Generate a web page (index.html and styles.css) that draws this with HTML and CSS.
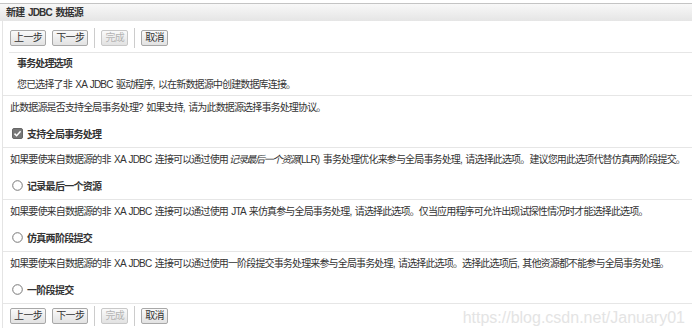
FILE: index.html
```html
<!DOCTYPE html>
<html lang="zh-CN">
<head>
  <meta charset="UTF-8" />
  <title>新建 JDBC 数据源</title>
  <link rel="stylesheet" href="styles.css">
</head>
<body>
  <div class="page">
    <div class="titlebar">新建 JDBC 数据源</div>
    <div class="panel">
      <div class="toolbar">
        <button class="btn">上一步</button>
        <button class="btn">下一步</button>
        <span class="sep"></span>
        <button class="btn disabled">完成</button>
        <span class="sep"></span>
        <button class="btn">取消</button>
      </div>

      <div class="intro">
        <div class="intro-title">事务处理选项</div>
        <div class="intro-text">您已选择了非 XA JDBC 驱动程序, 以在新数据源中创建数据库连接。</div>
      </div>

      <div class="row text">此数据源是否支持全局事务处理? 如果支持, 请为此数据源选择事务处理协议。</div>
      <div class="row option">
        <svg class="mark" viewBox="0 0 11 11" width="11" height="11">
          <rect x="0.5" y="0.5" width="10" height="10" rx="1.5" fill="#777" stroke="#666"/>
          <path d="M2.5 5.6 L4.6 7.7 L8.6 3.2" fill="none" stroke="#fff" stroke-width="1.5"/>
        </svg>
        <span>支持全局事务处理</span>
      </div>

      <div class="row text">如果要使来自数据源的非 XA JDBC 连接可以通过使用<i>记录最后一个资源</i>(LLR) 事务处理优化来参与全局事务处理, 请选择此选项。建议您用此选项代替仿真两阶段提交。</div>
      <div class="row option">
        <svg class="mark" viewBox="0 0 11 11" width="11" height="11">
          <circle cx="5.5" cy="5.5" r="4.8" fill="#fff" stroke="#777"/>
        </svg>
        <span>记录最后一个资源</span>
      </div>

      <div class="row text">如果要使来自数据源的非 XA JDBC 连接可以通过使用 JTA 来仿真参与全局事务处理, 请选择此选项。仅当应用程序可允许出现试探性情况时才能选择此选项。</div>
      <div class="row option">
        <svg class="mark" viewBox="0 0 11 11" width="11" height="11">
          <circle cx="5.5" cy="5.5" r="4.8" fill="#fff" stroke="#777"/>
        </svg>
        <span>仿真两阶段提交</span>
      </div>

      <div class="row text">如果要使来自数据源的非 XA JDBC 连接可以通过使用一阶段提交事务处理来参与全局事务处理, 请选择此选项。选择此选项后, 其他资源都不能参与全局事务处理。</div>
      <div class="row option">
        <svg class="mark" viewBox="0 0 11 11" width="11" height="11">
          <circle cx="5.5" cy="5.5" r="4.8" fill="#fff" stroke="#777"/>
        </svg>
        <span>一阶段提交</span>
      </div>

      <div class="toolbar bottom">
        <button class="btn">上一步</button>
        <button class="btn">下一步</button>
        <span class="sep"></span>
        <button class="btn disabled">完成</button>
        <span class="sep"></span>
        <button class="btn">取消</button>
      </div>
    </div>
    <div class="watermark">https://blog.csdn.net/January01</div>
  </div>
</body>
</html>
```
FILE: styles.css
```css
body {
  margin: 0;
  background: #fff;
  color: #333;
  font-family: "Liberation Sans", "Noto Sans CJK SC", sans-serif;
  font-size: 10px;
  letter-spacing: -0.85px;
  word-spacing: 1.5px;
}

.page {
  position: relative;
  width: 692px;
  height: 333px;
  overflow: hidden;
  padding-top: 3px;
  box-sizing: border-box;
}

.titlebar {
  height: 17px;
  line-height: 17px;
  border-top: 1px solid #c4c4c4;
  background: linear-gradient(#f8f8f8, #e5e5e5);
  padding-left: 6px;
  font-weight: bold;
  letter-spacing: -0.8px;
  color: #333;
}

.panel {
  margin-left: 2px;
  border-left: 1px solid #e4e4e4;
}

.toolbar {
  display: flex;
  align-items: center;
  gap: 6px;
  height: 29px;
  padding-top: 2px;
  padding-left: 1px;
  margin-left: 6px;
  border-bottom: 1px solid #e6e6e6;
}

.toolbar.bottom {
  border-bottom: none;
  height: 24px;
  padding-top: 0;
}

.btn {
  height: 16px;
  padding: 0 3px;
  border: 1px solid #a8a8a8;
  border-radius: 2px;
  background: linear-gradient(#fafafa, #e2e2e2);
  color: #333;
  font-family: inherit;
  font-size: 10px;
  letter-spacing: -0.6px;
  line-height: 14px;
}

.btn.disabled {
  color: #b4b4b4;
  border-color: #c8c8c8;
}

.sep {
  width: 1px;
  height: 20px;
  background: #cccccc;
}

.intro {
  padding-left: 14px;
  border-bottom: 1px solid #e6e6e6;
  height: 42px;
}

.intro-title {
  font-weight: bold;
  line-height: 21px;
}

.intro-text {
  line-height: 21px;
}

.row {
  padding-left: 7px;
  white-space: nowrap;
}

.row.text {
  height: 23px;
  line-height: 23px;
}

.row.option {
  display: flex;
  align-items: center;
  height: 28px;
  gap: 4px;
  font-weight: bold;
  letter-spacing: -0.7px;
  padding-left: 9px;
  border-bottom: 1px solid #e6e6e6;
}

.mark {
  flex: none;
}

i {
  font-style: italic;
  letter-spacing: -1.3px;
  margin-left: 1px;
}

.watermark {
  position: absolute;
  right: 7px;
  bottom: 6px;
  color: #e4e4e4;
  font-family: "Liberation Sans", sans-serif;
  font-size: 16px;
  letter-spacing: 0;
  word-spacing: 0;
}
```
